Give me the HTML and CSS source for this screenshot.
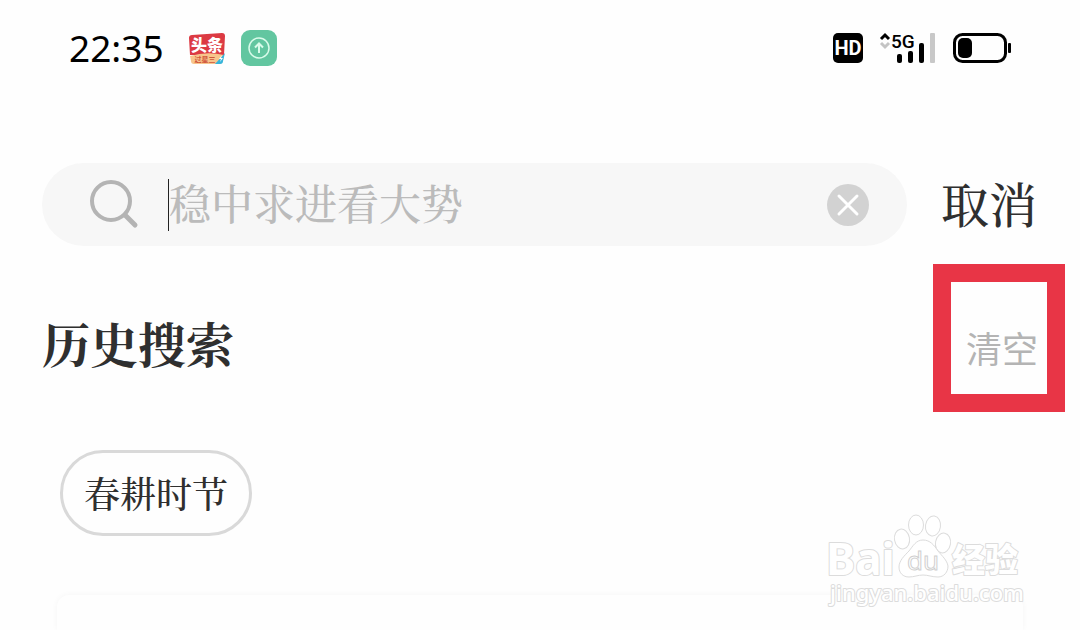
FILE: index.html
```html
<!DOCTYPE html>
<html lang="zh-CN">
<head>
    <meta charset="UTF-8">
    <meta name="viewport" content="width=device-width, initial-scale=1.0">
    <title>搜索</title>
    <link rel="stylesheet" href="styles.css">
</head>
<body>
    <div id="main">
        <!--状态栏-->
        <div id="status">
            <span class="time">22:35</span>
            <svg class="app-news" width="38" height="34" viewBox="0 0 38 34">
                <path d="M4 4L34 2Q37 2 37 5L36 24H2L1 7Q1 4 4 4Z" fill="#dc3a43"/>
                <path d="M2 25Q19 20 36 24L35 30Q34 33 31 33L6 33Q3 33 3 30Z" fill="#f8c58c"/>
                <path d="M37 22L27 33H32Q35 33 35 30Z" fill="#35b5dc"/>
                <path d="M34 24l-3 4h2l-1 3 3-4h-2z" fill="#fff"/>
                <text class="news-name" x="19" y="20" text-anchor="middle">头条</text>
                <text class="news-sub" x="17" y="31" text-anchor="middle">过星三</text>
            </svg>
            <svg class="app-up" width="36" height="36" viewBox="0 0 36 36" fill="none" stroke="#d9fbea" stroke-width="1.5">
                <rect width="36" height="36" rx="9" fill="#62c6a0" stroke="none"/>
                <circle cx="18" cy="18" r="10"/>
                <path d="M18 23V13.500M14 17.500L18 13.500L22 17.500" stroke-width="2"/>
            </svg>
            <div class="signals">
                <svg width="30" height="30" viewBox="0 0 30 30">
                    <rect width="30" height="30" rx="5"/>
                    <text class="hd" x="15" y="22" text-anchor="middle">HD</text>
                </svg>
                <svg class="net" width="58" height="40" viewBox="0 0 58 40">
                    <path d="M2 11L6 7L10 11" fill="none" stroke="#000" stroke-width="3"/>
                    <path d="M2 15L6 19L10 15" fill="none" stroke="#c4c4c4" stroke-width="3"/>
                    <text class="fiveg" x="12" y="20">5G</text>
                    <rect x="18" y="26" width="5" height="9" rx="2"/>
                    <rect x="29" y="23" width="5" height="12" rx="2"/>
                    <rect x="40" y="15" width="5" height="20" rx="2"/>
                    <rect x="51" y="5" width="5" height="30" rx="1" fill="#c8c8c8"/>
                </svg>
                <svg width="58" height="30" viewBox="0 0 58 30">
                    <rect x="1.500" y="1.500" width="51" height="27" rx="8" fill="none" stroke="#000" stroke-width="3"/>
                    <rect x="5" y="5" width="14" height="20" rx="5"/>
                    <rect x="55" y="10" width="3" height="10" rx="1"/>
                </svg>
            </div>
        </div>
        <!--搜索框-->
        <form id="search">
            <div class="box">
                <svg class="glass" width="50" height="50" viewBox="0 0 50 50" fill="none" stroke="#b4b4b4" stroke-width="4">
                    <circle cx="22" cy="21" r="19"/>
                    <path d="M36 35L46 45" stroke-width="5" stroke-linecap="round"/>
                </svg>
                <input type="text" placeholder="稳中求进看大势" aria-label="搜索">
                <button type="button" class="reset" aria-label="清除">
                    <svg width="42" height="42" viewBox="0 0 42 42">
                        <circle cx="21" cy="21" r="21" fill="#d2d2d2"/>
                        <path d="M12 12L30 30M30 12L12 30" stroke="#fff" stroke-width="3" stroke-linecap="round"/>
                    </svg>
                </button>
            </div>
            <button type="button" class="cancel">取消</button>
        </form>
        <!--历史搜索-->
        <div id="history">
            <h2>历史搜索</h2>
            <button type="button" class="clear">清空</button>
        </div>
        <div id="tags">
            <a href="#">春耕时节</a>
        </div>
        <div id="card"></div>
        <!--水印-->
        <svg id="mark" width="200" height="100" viewBox="0 0 200 100">
            <text class="logo" x="0" y="65">Bai</text>
            <g class="paw">
                <ellipse cx="76" cy="29" rx="7.500" ry="10" transform="rotate(-10 76 29)"/>
                <ellipse cx="90" cy="15" rx="7.500" ry="10"/>
                <ellipse cx="107" cy="16" rx="7.500" ry="10" transform="rotate(8 107 16)"/>
                <ellipse cx="117" cy="33" rx="7.500" ry="10" transform="rotate(10 117 33)"/>
                <path d="M97 30C90 30 87 36 83 41C78 46 73 51 73 57C73 63 77 67 83 67C88 67 92 65 97 65C102 65 106 67 112 67C118 67 122 62 122 56C121 50 116 46 112 41C108 35 104 30 97 30Z"/>
            </g>
            <text class="du" x="81" y="60">du</text>
            <text class="exp" x="126" y="62">经验</text>
            <text class="site" x="4" y="91">jingyan.baidu.com</text>
        </svg>
    </div>
</body>
</html>
```

FILE: styles.css
```css
*,*::after{
    margin:0;padding:0;
    box-sizing: border-box;
}
body{
    background-color: #fefefe;
    color:#2f2f2f;
    font-family: "Noto Serif CJK SC","Noto Serif SC","Noto Sans CJK SC",serif;
}
button{
    border:0;
    background: none;
    font-family: inherit;
    cursor: pointer;
}
svg{
    display: block;
}
#main{
    position: relative;
    min-height: 100vh;
    overflow: hidden;
    display: flex;
    flex-direction: column;
}
/*状态栏*/
#status{
    display: flex;
    align-items: center;
    height:96px;
    padding:0 69px;
    color:#000;
}
#status .time{
    font:37px/44px "Noto Sans",sans-serif;
}
#status .app-news{
    margin-left: 24px;
}
#status .app-up{
    margin-left: 15px;
}
.news-name{
    font:900 16px "Noto Sans CJK SC",sans-serif;
    fill:#fff;
}
.news-sub{
    font:bold 7px "Noto Sans CJK SC",sans-serif;
    fill:#d0563c;
}
.signals{
    display: flex;
    align-items: center;
    gap:16px;
    margin-left: auto;
}
.hd{
    font:bold 20px Roboto,sans-serif;
    fill:#fff;
}
.fiveg{
    font:500 19px Roboto,sans-serif;
}
/*搜索框*/
#search{
    display: flex;
    align-items: center;
    gap:34px;
    margin-top: 67px;
    padding:0 43px 0 42px;
}
#search .box{
    flex:1;
    min-width: 0;
    display: flex;
    align-items: center;
    height:83px;
    padding:0 38px 0 47px;
    border-radius: 42px;
    background-color: #f7f7f7;
}
#search input{
    flex:1;
    min-width: 0;
    height:52px;
    margin-left: 29px;
    padding-bottom: 6px;
    border:0;
    border-left:1px solid #222;
    outline: none;
    background: none;
    font-family: inherit;
    font-size: 42px;
    font-weight: 500;
}
#search input::placeholder{
    color:#bbb;
    opacity: 1;
}
#search .cancel{
    padding-bottom: 4px;
    color:#2f2f2f;
    font-size: 48px;
    font-weight: 500;
    line-height: 56px;
}
/*历史搜索*/
#history{
    display: flex;
    justify-content: space-between;
    align-items: flex-end;
    margin-top: 69px;
    padding:0 42px;
}
#history h2{
    font-size: 48px;
    line-height: 56px;
}
#history .clear{
    position: relative;
    color:#b4b4b4;
    font:36px/48px "Noto Sans CJK SC",sans-serif;
}
/*红框*/
#history .clear::after{
    content:"";
    position: absolute;
    top:-59px;
    left:-33px;
    width:132px;
    height:148px;
    border:18px solid #e83546;
}
#tags{
    display: flex;
    margin-top: 79px;
    padding:0 60px;
}
#tags a{
    padding:16px 21px;
    border:3px solid #d9d9d9;
    border-radius: 44px;
    color:#2f2f2f;
    font-size: 36px;
    font-weight: 500;
    line-height: 48px;
    text-decoration: none;
}
#card{
    flex:1;
    min-height: 34px;
    margin:59px 57px 0;
    border-radius: 12px 12px 0 0;
    background-color: #fefefe;
    box-shadow: 0 0 6px rgba(0,0,0,.04);
}
/*水印*/
#mark{
    position: absolute;
    right:54px;
    bottom:20px;
    fill:#fff;
    stroke:#dcdcdc;
    stroke-width:1px;
}
#mark .logo,#mark .exp,#mark .site{
    stroke-width:2px;
    stroke-linejoin: round;
    paint-order: stroke;
}
#mark .logo{
    font:bold 44px "Noto Sans",sans-serif;
}
#mark .du{
    font:26px "Noto Sans",sans-serif;
    stroke:#cfcfcf;
}
#mark .exp{
    font:900 33px "Noto Sans CJK SC",sans-serif;
}
#mark .site{
    font:500 22px "Noto Sans",sans-serif;
}
```
